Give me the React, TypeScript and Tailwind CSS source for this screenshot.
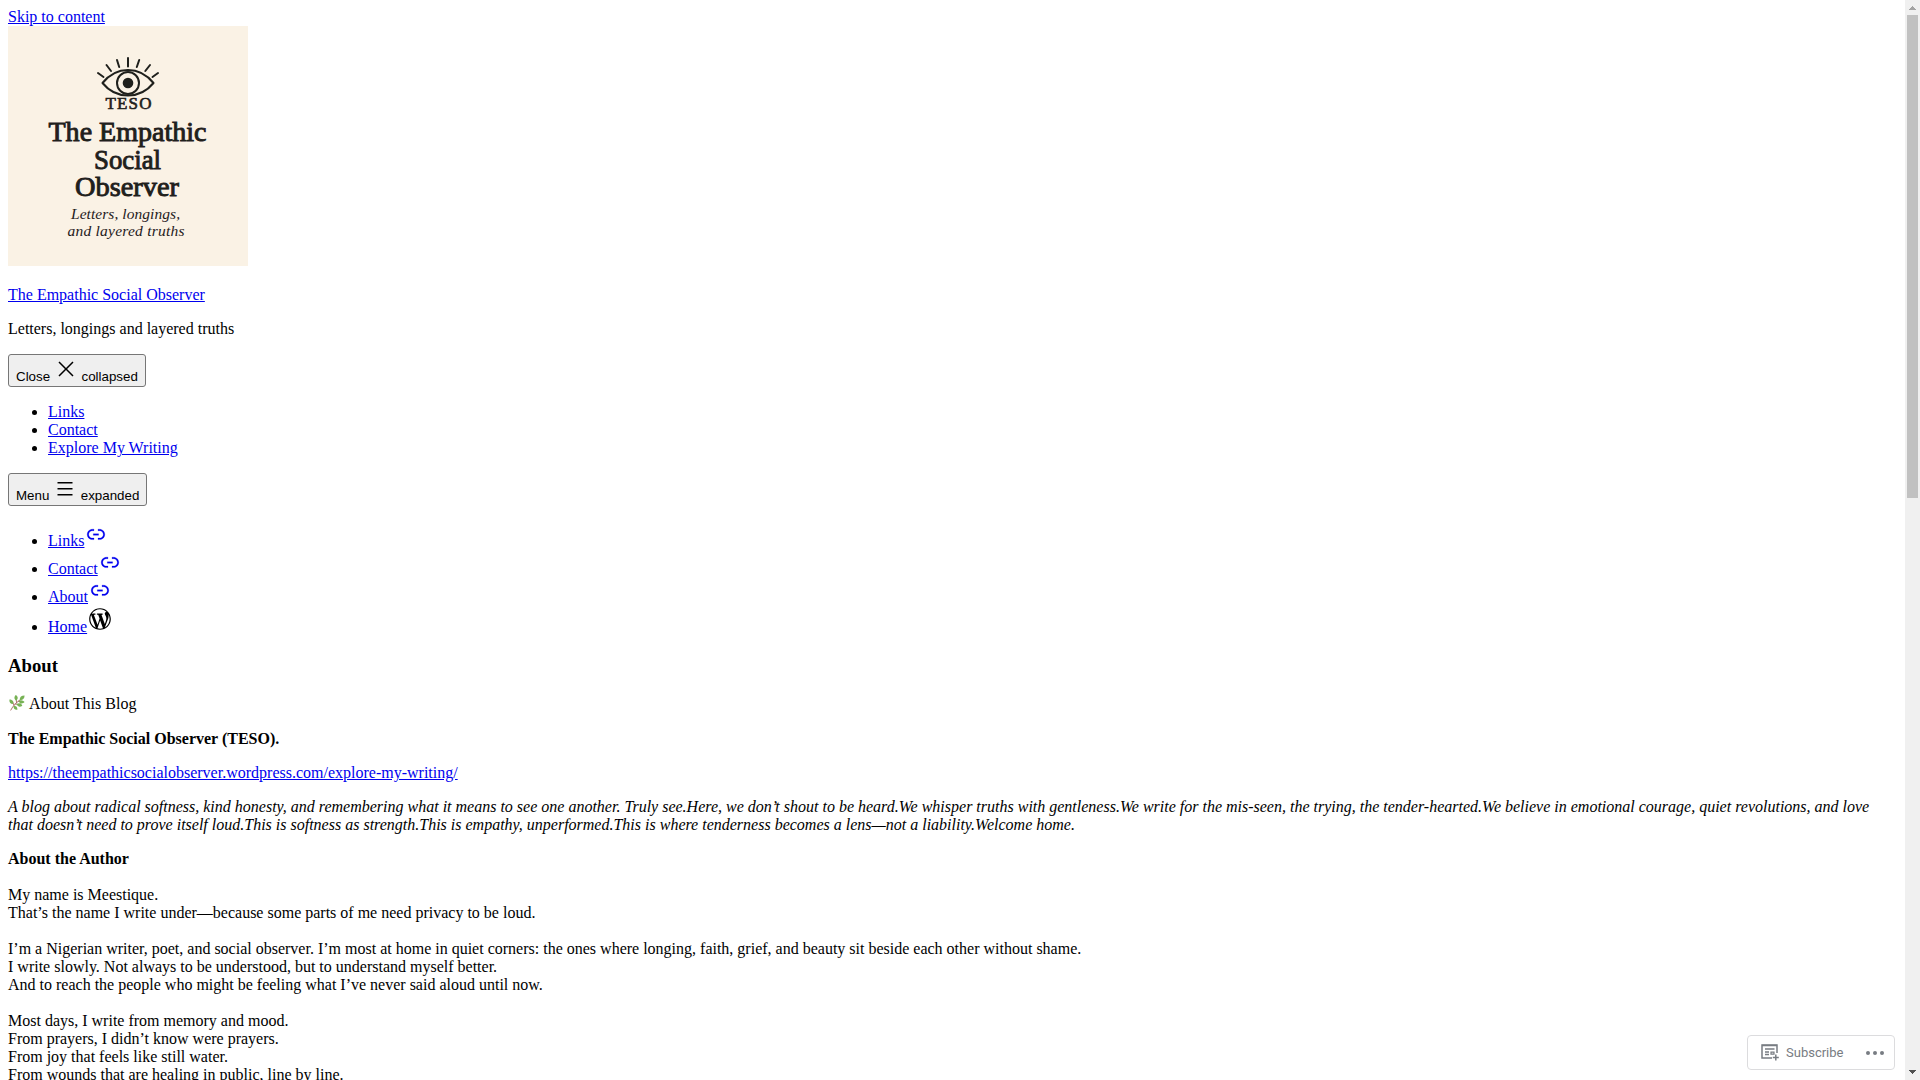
const primaryLinks = ['Links', 'Contact', 'Explore My Writing']
const socialLinks = ['Links', 'Contact', 'About']

const aboutLines = [
    'My name is Meestique.',
    'That’s the name I write under—because some parts of me need privacy to be loud.',
    '',
    'I’m a Nigerian writer, poet, and social observer. I’m most at home in quiet corners: the ones where longing, faith, grief, and beauty sit beside each other without shame.',
    'I write slowly. Not always to be understood, but to understand myself better.',
    'And to reach the people who might be feeling what I’ve never said aloud until now.',
    '',
    'Most days, I write from memory and mood.',
    'From prayers, I didn’t know were prayers.',
    'From joy that feels like still water.',
    'From wounds that are healing in public, line by line.',
]

const Link = ({ children }: { children: React.ReactNode }) => (
    <a href="#" className="text-[#0000ee] underline">{children}</a>
)

const Logo = () => (
    <svg className="block h-[240px] w-[240px]" viewBox="0 0 240 240" fill="none">
        <rect width="240" height="240" fill="#faf2e5" />
        <g stroke="#1f201c" strokeWidth="2" strokeLinecap="round">
            <path d="M94.5 57C101 49 109 44 120 44s19 5 25.500 13C139 65 131 69.500 120 69.500S101 65 94.500 57z" strokeLinejoin="round" />
            <circle cx="120" cy="57" r="11" />
            <path d="M120 32v8.500M109 34l2.200 7M131.200 34l-2.400 7M98.500 39l4.500 6M142 39l-4.700 6M90 47l5.500 4M150 47l-5.500 4" />
        </g>
        <circle cx="120" cy="57" r="5.300" fill="#1f201c" />
        <g fill="#1f201c" fontFamily="Liberation Serif, serif" textAnchor="middle">
            <text x="120.500" y="83" fontSize="17" textLength="46" stroke="#1f201c" strokeWidth=".6">TESO</text>
            {/* regular weight with an outline gives the semi-bold of the wordmark */}
            <g fontSize="27.500" stroke="#1f201c" strokeWidth=".9">
                <text x="119.500" y="115" textLength="158" lengthAdjust="spacingAndGlyphs">The Empathic</text>
                <text x="119.500" y="142.500" textLength="67" lengthAdjust="spacingAndGlyphs">Social</text>
                <text x="119" y="170" textLength="104" lengthAdjust="spacingAndGlyphs">Observer</text>
            </g>
            <g fontStyle="italic" fontSize="15.500">
                <text x="117.500" y="193" textLength="109">Letters, longings,</text>
                <text x="118" y="210" textLength="117">and layered truths</text>
            </g>
        </g>
    </svg>
)

const LinkIcon = () => (
    <svg className="inline-block h-6 w-6 align-baseline" viewBox="0 0 24 24" fill="#0000ee" stroke="#0000ee" strokeWidth=".25">
        <path d="M15.6 7.2H14v1.5h1.6c2 0 3.7 1.7 3.7 3.7s-1.7 3.7-3.7 3.7H14v1.5h1.6c2.8 0 5.2-2.300 5.2-5.200 0-2.900-2.300-5.200-5.200-5.200zM4.700 12.400c0-2 1.700-3.700 3.700-3.700H10V7.200H8.400c-2.900 0-5.200 2.300-5.200 5.200 0 2.900 2.300 5.200 5.200 5.200H10v-1.500H8.400c-2 0-3.700-1.700-3.700-3.700zm4.600.9h5.300v-1.500H9.300v1.500z" />
    </svg>
)

const WordPressIcon = () => (
    <svg className="inline-block h-[26px] w-[26px] align-baseline" viewBox="-2 -2 24 24" fill="currentColor">
        <path d="M20 10c0-5.510-4.490-10-10-10C4.480 0 0 4.490 0 10c0 5.520 4.480 10 10 10 5.510 0 10-4.480 10-10zM7.780 15.370L4.370 6.220c.55-.02 1.170-.08 1.170-.08.5-.06.44-1.130-.06-1.110 0 0-1.450.11-2.370.11-.18 0-.37 0-.58-.01C4.120 2.690 6.870 1.110 10 1.110c2.330 0 4.450.87 6.050 2.340-.68-.11-1.650.39-1.650 1.580 0 .74.45 1.360.9 2.100.35.61.55 1.360.55 2.460 0 1.490-1.400 5-1.400 5l-3.030-8.370c.54-.02.82-.17.82-.17.5-.05.44-1.250-.06-1.220 0 0-1.440.12-2.380.12-.87 0-2.330-.12-2.330-.12-.5-.03-.56 1.200-.06 1.220l.92.08 1.260 3.410zM17.410 10c.24-.64.74-1.870.43-4.250.7 1.290 1.050 2.710 1.050 4.250 0 3.290-1.730 6.240-4.400 7.780.97-2.590 1.940-5.200 2.920-7.780zM6.100 18.090C3.120 16.650 1.110 13.530 1.110 10c0-1.300.23-2.480.72-3.590C3.250 10.300 4.670 14.200 6.100 18.090zm4.030-6.630l2.580 6.980c-.86.29-1.760.45-2.710.45-.79 0-1.570-.11-2.290-.33.81-2.380 1.620-4.740 2.420-7.100z" />
    </svg>
)

const MenuButton = ({ before, after, path }: { before: string, after: string, path: string }) => (
    <button className="block h-[33px] whitespace-nowrap rounded-[3px] border border-[#767676] bg-[#efefef] px-[7px] text-left font-['Liberation_Sans',sans-serif] text-[13.333px] leading-[15px] text-black">
        {before}{' '}
        <svg className="inline-block h-6 w-6 align-baseline" viewBox="0 0 24 24" fill="currentColor">
            <path fillRule="evenodd" d={path} />
        </svg>
        {' '}{after}
    </button>
)

const Herb = () => (
    <svg className="mx-px inline-block h-4 w-4 align-[-1.600px]" viewBox="0 0 36 36">
        <path d="M4 34C9 24 17 16 28 9M11 23 8 14M17 17l-1-9M14 20l10 2M21 14l8 2" stroke="#a5665f" strokeWidth="2" fill="none" strokeLinecap="round" />
        <g fill="#77b255">
            <path d="M24 11c0-7 4-10 11-10 0 7-4 11-11 10zM16 13c-5-4-5-9-1-13 6 3 6 9 1 13zM9 20C3 20 0 16 1 10c6 0 10 4 8 10z" />
            <path d="M22 15c3-5 9-4 13 1-5 5-9 4-13-1zM17 21c5-4 10-3 13 3-5 4-10 3-13-3zM10 25c6-2 9 2 9 8-6 1-9-2-9-8z" />
        </g>
    </svg>
)

const SubscribeBar = () => (
    <div className="fixed bottom-[10px] right-[25px] flex h-[35px] w-[148px] items-center rounded-[4px] border border-[#dcdcde] bg-white pl-[13px] font-[Roboto,sans-serif] text-[13px] text-[#787c82]">
        <svg className="h-[17px] w-[18px] shrink-0" viewBox="0 0 18 17" fill="none" stroke="#787c82">
            <path d="M16 9V1H1v13h10" strokeWidth="1.500" />
            <path d="M1 1.500h15M4 5h9.500M4 8h4M4 10.500h4" strokeWidth="1.300" />
            <path d="M10 8.200h3v2h-3z" strokeWidth="1.200" />
            <path d="M14.800 10.500v6M11.800 13.500h6" strokeWidth="1.500" />
        </svg>
        <span className="ml-[7px] leading-none">Subscribe</span>
        <svg className="ml-[23px] h-1 w-[18px] shrink-0" viewBox="0 0 18 4" fill="#787c82">
            <circle cx="2" cy="2" r="2" />
            <circle cx="9" cy="2" r="2" />
            <circle cx="16" cy="2" r="2" />
        </svg>
    </div>
)

const Scrollbar = () => (
    <div className="flex w-[15px] shrink-0 flex-col items-center bg-[#f0f0f0]">
        <svg className="h-[15px] w-[15px] shrink-0" viewBox="0 0 15 15" fill="#a3a3a3" shapeRendering="crispEdges">
            <path d="M7 6h1v1h1v1h1v1h1v1H4V9h1V8h1V7h1z" />
        </svg>
        <div className="h-[483px] w-[11px] shrink-0 bg-[#c1c1c1]" />
        <svg className="mt-auto h-[15px] w-[15px] shrink-0" viewBox="0 0 15 15" fill="#505050" shapeRendering="crispEdges">
            <path d="M4 5h7v1h-1v1H9v1H8v1H7V8H6V7H5V6H4z" />
        </svg>
    </div>
)

const App = () => {
    return (
        <div className="flex h-screen overflow-hidden bg-white font-['Liberation_Serif',serif] text-[16px] leading-[18px] text-black">
            <main className="min-w-0 flex-1 p-2">
                <header>
                    <div className="h-[18px]"><Link>Skip to content</Link></div>
                    <Logo />
                    <p className="mt-5"><Link>The Empathic Social Observer</Link></p>
                    <p className="my-4">Letters, longings and layered truths</p>
                    <MenuButton
                        before="Close"
                        after="collapsed"
                        path="M12 10.939 5.530 4.470 4.470 5.530 10.939 12l-6.469 6.470 1.060 1.060L12 13.061l6.470 6.469 1.060-1.060L13.061 12l6.469-6.470-1.060-1.060L12 10.939z"
                    />
                    <ul className="my-4 list-disc pl-10">
                        {primaryLinks.map((item) => (
                            <li key={item}><Link>{item}</Link></li>
                        ))}
                    </ul>
                    <MenuButton
                        before="Menu"
                        after="expanded"
                        path="M4.500 6h15v1.500h-15V6zm0 6h15v1.500h-15V12zm15 6h-15v1.500h15V18z"
                    />
                    <ul className="mt-4 list-disc pl-10">
                        {socialLinks.map((item) => (
                            <li key={item} className="h-7"><Link>{item}</Link><LinkIcon /></li>
                        ))}
                        <li className="h-[30px]"><Link>Home</Link><WordPressIcon /></li>
                    </ul>
                </header>
                <article>
                    <h3 className="mt-[19px] text-[18.720px] font-bold leading-[21px]">About</h3>
                    <p className="mt-[19px] h-[19px]"><Herb /> About This Blog</p>
                    <p className="mt-4 font-bold">The Empathic Social Observer (TESO).</p>
                    <p className="mt-4"><Link>https://theempathicsocialobserver.wordpress.com/explore-my-writing/</Link></p>
                    <p className="mt-4 italic">
                        A blog about radical softness, kind honesty, and remembering what it means to see one another. Truly see.Here, we don’t shout to be heard.We whisper truths with gentleness.We write for the mis-seen, the trying, the tender-hearted.We believe in emotional courage, quiet revolutions, and love that doesn’t need to prove itself loud.This is softness as strength.This is empathy, unperformed.This is where tenderness becomes a lens—not a liability.Welcome home.
                    </p>
                    <p className="mt-4 font-bold">About the Author</p>
                    <div className="mt-[18px]">
                        {aboutLines.map((line, i) => (
                            <p key={i} className="h-[18px] whitespace-nowrap">{line}</p>
                        ))}
                    </div>
                </article>
            </main>
            <Scrollbar />
            <SubscribeBar />
        </div>
    )
}

export default App
